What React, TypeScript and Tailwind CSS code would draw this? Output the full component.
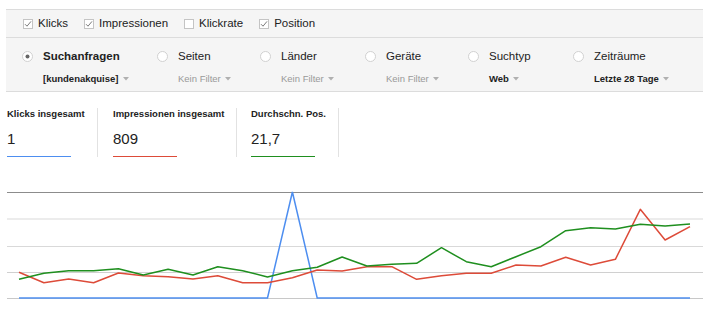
import React from 'react'

const font = "font-['Liberation_Sans',Arial,Helvetica,sans-serif]"

const checks = [
  { label: 'Klicks', on: true },
  { label: 'Impressionen', on: true },
  { label: 'Klickrate', on: false },
  { label: 'Position', on: true },
]

const filters = [
  { title: 'Suchanfragen', sub: '[kundenakquise]', active: true, set: true, w: 'w-[135px]' },
  { title: 'Seiten', sub: 'Kein Filter', active: false, set: false, w: 'w-[103px]' },
  { title: 'Länder', sub: 'Kein Filter', active: false, set: false, w: 'w-[105px]' },
  { title: 'Geräte', sub: 'Kein Filter', active: false, set: false, w: 'w-[103px]' },
  { title: 'Suchtyp', sub: 'Web', active: false, set: true, w: 'w-[105px]' },
  { title: 'Zeiträume', sub: 'Letzte 28 Tage', active: false, set: true, w: 'w-[120px]' },
]

const metrics = [
  { label: 'Klicks insgesamt', value: '1', line: 'bg-[#4d8ef0]', cls: 'w-[98px] pl-[7px]' },
  { label: 'Impressionen insgesamt', value: '809', line: 'bg-[#dd4b39]', cls: 'w-[139px] pl-[15px]' },
  { label: 'Durchschn. Pos.', value: '21,7', line: 'bg-[#1f8f1f]', cls: 'w-[102px] pl-[14px]' },
]

const red = [272.3, 282.7, 279, 282.7, 273, 275.7, 276.7, 279, 275.7, 282.7, 282.7, 277.7, 270, 271, 266.7, 266.7, 279.3, 275.7, 273.3, 273.3, 265, 266, 257.3, 265, 259.3, 209.3, 240, 226.7]
const green = [279.3, 273.3, 270.7, 270.7, 268.7, 275, 269.3, 275, 266.7, 270.7, 277, 270.7, 267.3, 257, 266, 264.3, 263.3, 247.7, 261.7, 266.7, 256.7, 246.7, 230.7, 227.7, 229, 224.3, 226, 224]
const blue = red.map((_, i) => (i === 11 ? 192 : 298))

const xAt = (i: number) => 19 + (i * (690 - 19)) / 27
const pts = (ys: number[]) => ys.map((y, i) => `${xAt(i).toFixed(1)},${y}`).join(' ')

function Checkbox({ on }: { on: boolean }) {
  return (
    <svg width="10" height="10" viewBox="0 0 10 10" className="shrink-0">
      <rect x="0.5" y="0.5" width="9" height="9" fill="#fff" stroke="#c4c4c4" />
      {on && <path d="M2 5.2 L4 7.2 L8 2.4" fill="none" stroke="#7a7a7a" strokeWidth="1" />}
    </svg>
  )
}

function Radio({ on }: { on: boolean }) {
  return (
    <svg width="11" height="11" viewBox="0 0 11 11" className="shrink-0">
      <circle cx="5.5" cy="5.5" r="5" fill="#fff" stroke="#d0d0d0" />
      {on && <circle cx="5.5" cy="5.5" r="2" fill="#666" />}
    </svg>
  )
}

function Caret() {
  return (
    <svg width="6" height="4" viewBox="0 0 6 4" className="ml-[4px] mt-[1px]">
      <path d="M0 0 L6 0 L3 3.5 Z" fill="#b0b0b0" />
    </svg>
  )
}

export default function App() {
  return (
    <div className={`w-[710px] h-[313px] bg-white overflow-hidden pt-[9px] text-[#222] ${font}`}>
      <div className="ml-[6px] w-[697px] bg-[#f5f5f5] border-y border-[#dcdcdc]">
        <div className="h-[28px] flex items-center pl-[17px] gap-[16px] border-b border-[#dcdcdc]">
          {checks.map(c => (
            <div key={c.label} className="flex items-center gap-[5px] text-[11.5px] leading-none">
              <Checkbox on={c.on} />
              <span>{c.label}</span>
            </div>
          ))}
        </div>
        <div className="h-[53px] flex pl-[16px] pt-[12px]">
          {filters.map(f => (
            <div key={f.title} className={`${f.w} flex items-start`}>
              <div className="pt-[1px]">
                <Radio on={f.active} />
              </div>
              <div className="ml-[10px] flex flex-col">
                <span className={`text-[11.5px] leading-[13px] ${f.active ? 'font-bold' : ''}`}>{f.title}</span>
                <span className="flex items-center mt-[10px] text-[9.5px] leading-[11px]">
                  <span className={f.set ? 'font-bold text-[#222]' : 'text-[#999]'}>{f.sub}</span>
                  <Caret />
                </span>
              </div>
            </div>
          ))}
        </div>
      </div>

      <div className="flex mt-[16px] h-[49px]">
        {metrics.map(m => (
          <div key={m.label} className={`${m.cls} shrink-0 border-r border-[#e2e2e2] flex flex-col`}>
            <span className="text-[9.5px] leading-[12px] font-bold whitespace-nowrap">{m.label}</span>
            <span className="mt-[10px] text-[15px] leading-[18px]">{m.value}</span>
            <div className={`mt-[8px] w-[64px] h-[2px] ${m.line}`} />
          </div>
        ))}
      </div>

      <svg width="710" height="128" viewBox="0 185 710 128" className="block mt-[28px]">
        <line x1="7" y1="192.5" x2="703" y2="192.5" stroke="#8c8c8c" strokeWidth="1" />
        <line x1="7" y1="219" x2="703" y2="219" stroke="#ececec" strokeWidth="2" />
        <line x1="7" y1="246.5" x2="703" y2="246.5" stroke="#d9d9d9" strokeWidth="1" />
        <line x1="7" y1="272.5" x2="703" y2="272.5" stroke="#d0d0d0" strokeWidth="1" />
        <line x1="7" y1="298.5" x2="703" y2="298.5" stroke="#c8c8c8" strokeWidth="1" />
        <polyline points={pts(blue)} fill="none" stroke="#4d8ef0" strokeWidth="1.5" strokeLinejoin="miter" />
        <polyline points={pts(red)} fill="none" stroke="#dd4b39" strokeWidth="1.5" strokeLinejoin="round" />
        <polyline points={pts(green)} fill="none" stroke="#1f8f1f" strokeWidth="1.5" strokeLinejoin="round" />
      </svg>
    </div>
  )
}
